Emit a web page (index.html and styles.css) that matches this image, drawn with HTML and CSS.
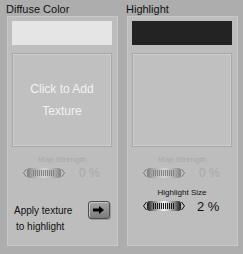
FILE: index.html
```html
<!DOCTYPE html>
<html lang="en">
  <head>
    <meta charset="UTF-8" />
    <title>Material Editor</title>
    <link rel="stylesheet" href="styles.css">
  </head>
  <body>
    <div class="editor">
      <!-- Diffuse column -->
      <div class="col">
        <div class="title">Diffuse Color</div>
        <div class="panel">
          <div class="swatch light"></div>
          <div class="texture">
            <span>Click to Add</span>
            <span>Texture</span>
          </div>
          <div class="label off">Map Strength</div>
          <div class="slider-row off">
            <svg class="slider" width="44" height="12" viewBox="0 0 44 12">
              <defs>
                <linearGradient id="knobA" x1="0" x2="1" y1="0" y2="0">
                  <stop offset="0" stop-color="#2a2a2a" />
                  <stop offset="0.18" stop-color="#909090" />
                  <stop offset="0.5" stop-color="#f2f2f2" />
                  <stop offset="0.82" stop-color="#909090" />
                  <stop offset="1" stop-color="#2a2a2a" />
                </linearGradient>
              </defs>
              <polyline points="4.5,2 1.5,6 4.5,10" fill="none" stroke="#222" />
              <rect x="5" y="1" width="34" height="10" rx="3" fill="url(#knobA)" />
              <path d="M11.5 3v6M13.5 3v6M15.5 3v6M17.5 3v6M19.5 3v6M21.5 3v6M23.5 3v6M25.5 3v6M27.5 3v6M29.5 3v6M31.5 3v6" stroke="#2a2a2a" />
              <polyline points="39.5,2 42.5,6 39.5,10" fill="none" stroke="#222" />
            </svg>
            <span class="value">0 %</span>
          </div>
          <div class="apply">
            <div class="apply-text">
              <div>Apply texture</div>
              <div class="second">to highlight</div>
            </div>
            <button class="arrow-btn">
              <svg width="12" height="8" viewBox="0 0 12 8">
                <path d="M0 2.5h6V0l5 4-5 4V5.5H0z" fill="#000" />
              </svg>
            </button>
          </div>
        </div>
      </div>

      <!-- Highlight column -->
      <div class="col">
        <div class="title">Highlight</div>
        <div class="panel">
          <div class="swatch dark"></div>
          <div class="texture"></div>
          <div class="label off">Map Strength</div>
          <div class="slider-row off">
            <svg class="slider" width="44" height="12" viewBox="0 0 44 12">
              <defs>
                <linearGradient id="knobB" x1="0" x2="1" y1="0" y2="0">
                  <stop offset="0" stop-color="#2a2a2a" />
                  <stop offset="0.18" stop-color="#909090" />
                  <stop offset="0.5" stop-color="#f2f2f2" />
                  <stop offset="0.82" stop-color="#909090" />
                  <stop offset="1" stop-color="#2a2a2a" />
                </linearGradient>
              </defs>
              <polyline points="4.5,2 1.5,6 4.5,10" fill="none" stroke="#222" />
              <rect x="5" y="1" width="34" height="10" rx="3" fill="url(#knobB)" />
              <path d="M11.5 3v6M13.5 3v6M15.5 3v6M17.5 3v6M19.5 3v6M21.5 3v6M23.5 3v6M25.5 3v6M27.5 3v6M29.5 3v6M31.5 3v6" stroke="#2a2a2a" />
              <polyline points="39.5,2 42.5,6 39.5,10" fill="none" stroke="#222" />
            </svg>
            <span class="value">0 %</span>
          </div>
          <div class="label size">Highlight Size</div>
          <div class="slider-row">
            <svg class="slider" width="44" height="12" viewBox="0 0 44 12">
              <defs>
                <linearGradient id="knobC" x1="0" x2="1" y1="0" y2="0">
                  <stop offset="0" stop-color="#1a1a1a" />
                  <stop offset="0.18" stop-color="#808080" />
                  <stop offset="0.5" stop-color="#f6f6f6" />
                  <stop offset="0.82" stop-color="#808080" />
                  <stop offset="1" stop-color="#1a1a1a" />
                </linearGradient>
              </defs>
              <polyline points="4.5,2 1.5,6 4.5,10" fill="none" stroke="#111" />
              <rect x="5" y="1" width="34" height="10" rx="3" fill="url(#knobC)" />
              <path d="M11.5 3v6M13.5 3v6M15.5 3v6M17.5 3v6M19.5 3v6M21.5 3v6M23.5 3v6M25.5 3v6M27.5 3v6M29.5 3v6M31.5 3v6" stroke="#1a1a1a" />
              <polyline points="39.5,2 42.5,6 39.5,10" fill="none" stroke="#111" />
            </svg>
            <span class="value big">2 %</span>
          </div>
        </div>
      </div>
    </div>
  </body>
</html>
```

FILE: styles.css
```css
body {
  margin: 0;
  background: #adadad;
  font-family: "Liberation Sans", Arial, sans-serif;
  color: #111;
}

.editor {
  display: flex;
  gap: 9px;
  padding: 3px 0 0 7px;
}

/* Column */
.col {
  width: 111px;
}

.title {
  height: 13px;
  line-height: 13px;
  font-size: 11px;
  margin-left: -1px;
}

.panel {
  box-sizing: border-box;
  height: 230px;
  border: 1px solid #c8c8c8;
  background: #bdbdbd;
  padding: 4px 5px 0 4px;
  display: flex;
  flex-direction: column;
}

/* Colour swatch */
.swatch {
  height: 24px;
}

.swatch.light {
  background: #e5e5e5;
}

.swatch.dark {
  background: #232323;
}

/* Texture drop box */
.texture {
  box-sizing: border-box;
  height: 94px;
  margin-top: 8px;
  border: 1px solid #a9a9a9;
  box-shadow: inset 1px 1px 0 #cdcdcd, inset -1px -1px 0 #cdcdcd;
  background: #c0c0c0;
  display: flex;
  flex-direction: column;
  align-items: center;
  justify-content: center;
  gap: 8px;
  color: #f2f2f2;
  font-size: 12px;
  line-height: 14px;
}

/* Labels and sliders */
.label {
  margin-top: 8px;
  height: 10px;
  line-height: 10px;
  font-size: 8px;
  text-align: center;
}

.label.off {
  color: #a8a8a8;
}

.label.size {
  margin-top: 9px;
  color: #111;
}

.slider-row {
  display: flex;
  align-items: center;
  height: 12px;
  margin-top: 2px;
  padding-left: 10px;
}

.slider-row.off .slider {
  opacity: 0.4;
}

.value {
  margin-left: 13px;
  font-size: 12px;
}

.slider-row.off .value {
  color: #a8a8a8;
}

.value.big {
  margin-left: 11px;
  font-size: 13px;
}

/* Apply texture to highlight */
.apply {
  display: flex;
  align-items: flex-start;
  margin-top: 24px;
}

.apply-text {
  font-size: 10px;
  line-height: 16px;
  padding-left: 2px;
  width: 74px;
}

.apply-text .second {
  padding-left: 2px;
}

.arrow-btn {
  box-sizing: border-box;
  width: 22px;
  height: 18px;
  margin-top: -2px;
  padding: 0;
  border: 1px solid #4e4e4e;
  border-radius: 3px;
  background: linear-gradient(#a4a4a4, #7c7c7c);
  box-shadow: inset 1px 1px 0 #c4c4c4, 1px 1px 0 #999;
  display: flex;
  align-items: center;
  justify-content: center;
  cursor: pointer;
}
```
